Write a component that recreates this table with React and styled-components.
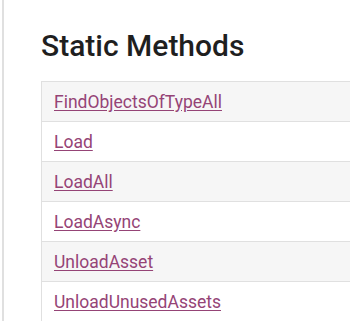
import React from "react";
import styled, { createGlobalStyle } from "styled-components";

const GlobalStyle = createGlobalStyle`
  html, body {
    margin: 0;
    padding: 0;
    background: #fff;
    font-family: Roboto, "Liberation Sans", sans-serif;
  }
`;

const Page = styled.div`
  display: flex;
  height: 321px;
  overflow: hidden;
`;

const SideRule = styled.div`
  width: 2px;
  margin-left: 2px;
  background: #e0e0e0;
  flex-shrink: 0;
`;

const Content = styled.div`
  padding: 28px 0 0 37px;
  flex: 1;
  min-width: 0;
`;

const Title = styled.h2`
  margin: 0 0 17px;
  font-size: 30px;
  font-weight: 500;
  color: #1f1f1f;
  line-height: 36px;
`;

const Table = styled.div`
  border-top: 1px solid #e0e0e0;
  border-left: 1px solid #e0e0e0;
  width: 400px;
`;

const Row = styled.div`
  height: 39px;
  display: flex;
  align-items: center;
  padding-left: 12px;
  border-bottom: 1px solid #e0e0e0;
  background: ${(p) => (p.$shaded ? "#f6f6f6" : "#fff")};
`;

const MethodLink = styled.a`
  color: #954476;
  font-size: 17.5px;
  text-decoration: underline;
  text-underline-offset: 2px;
`;

const methods = [
  "FindObjectsOfTypeAll",
  "Load",
  "LoadAll",
  "LoadAsync",
  "UnloadAsset",
  "UnloadUnusedAssets",
];

export default function App() {
  return (
    <>
      <GlobalStyle />
      <Page>
        <SideRule />
        <Content>
          <Title>Static Methods</Title>
          <Table>
            {methods.map((m, i) => (
              <Row key={m} $shaded={i % 2 === 0}>
                <MethodLink href="#">{m}</MethodLink>
              </Row>
            ))}
          </Table>
        </Content>
      </Page>
    </>
  );
}
